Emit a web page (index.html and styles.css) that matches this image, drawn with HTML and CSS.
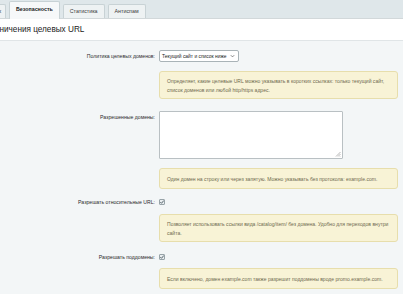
FILE: index.html
```html
<!DOCTYPE html>
<html lang="ru">
<head>
<meta charset="utf-8">
<link rel="stylesheet" href="styles.css">
</head>
<body>
<div class="tabs">
  <div class="tab tab-first">Сокращение ссылок</div>
  <div class="tab tab-active">Безопасность</div>
  <div class="tab">Статистика</div>
  <div class="tab">Антиспам</div>
</div>
<div class="title"><span class="title-text">Ограничения целевых URL</span></div>
<div class="content">
  <div class="row row-select">
    <div class="label">Политика целевых доменов:</div>
    <div class="field">
      <div class="select"><span>Текущий сайт и список ниже</span><svg class="arrow" width="5" height="4" viewBox="0 0 5 4"><path d="M0.8 1.2 L2.5 2.9 L4.2 1.2" fill="none" stroke="#555" stroke-width="0.7"/></svg></div>
    </div>
  </div>
  <div class="row row-note1">
    <div class="label"></div>
    <div class="note">Определяет, какие целевые URL можно указывать в коротких ссылках: только текущий сайт, список доменов или любой http/https адрес.</div>
  </div>
  <div class="row row-area">
    <div class="label label-top">Разрешенные домены:</div>
    <div class="field">
      <div class="textarea"><svg class="grip" width="6" height="6" viewBox="0 0 6 6"><path d="M5.5 1 L1 5.5 M5.5 3 L3 5.5 M5.5 5 L5 5.5" stroke="#999" stroke-width="0.7"/></svg></div>
    </div>
  </div>
  <div class="row row-note2">
    <div class="label"></div>
    <div class="note">Один домен на строку или через запятую. Можно указывать без протокола: example.com.</div>
  </div>
  <div class="row row-cb1">
    <div class="label">Разрешать относительные URL:</div>
    <div class="field"><span class="cb"><svg width="6" height="6" viewBox="0 0 6 6"><path d="M1.3 3.1 L2.5 4.3 L4.8 1.5" fill="none" stroke="#4a5860" stroke-width="0.9"/></svg></span></div>
  </div>
  <div class="row row-note3">
    <div class="label"></div>
    <div class="note">Позволяет использовать ссылки вида /catalog/item/ без домена. Удобно для переходов внутри сайта.</div>
  </div>
  <div class="row row-cb2">
    <div class="label">Разрешать поддомены:</div>
    <div class="field"><span class="cb"><svg width="6" height="6" viewBox="0 0 6 6"><path d="M1.3 3.1 L2.5 4.3 L4.8 1.5" fill="none" stroke="#4a5860" stroke-width="0.9"/></svg></span></div>
  </div>
  <div class="row row-note4">
    <div class="label"></div>
    <div class="note">Если включено, домен example.com также разрешит поддомены вроде promo.example.com.</div>
  </div>
</div>
</body>
</html>
```
FILE: styles.css
```css
html, body {
  margin: 0;
  padding: 0;
  width: 403px;
  height: 294px;
  overflow: hidden;
  background: #f3f6f7;
  font-family: "Liberation Sans", Arial, sans-serif;
  color: #2b2b2b;
}

.tabs {
  height: 18px;
  background: #dfe7ea;
  border-bottom: 1px solid #d2d8da;
  display: flex;
  align-items: flex-end;
  gap: 3px;
  margin-left: -56px;
}

.tab {
  height: 14px;
  box-sizing: border-box;
  padding: 0 6px;
  background: #eef2f3;
  border: 1px solid #c8d2d5;
  border-bottom: none;
  border-radius: 2px 2px 0 0;
  font-size: 5.3px;
  line-height: 13px;
  color: #3a3a3a;
  white-space: nowrap;
}

.tab-first {
  width: 62px;
  text-align: right;
}

.tab-active {
  height: 18px;
  margin-bottom: -1px;
  background: #f6f8f9;
  font-weight: bold;
  padding: 0 6px;
  line-height: 15px;
  color: #222;
}

.title {
  height: 21px;
  background: #ffffff;
  border-bottom: 1px solid #e0e5e7;
  display: flex;
  align-items: center;
  overflow: hidden;
}

.title-text {
  margin-left: -19px;
  font-size: 8.2px;
  color: #222;
  white-space: nowrap;
}

.content {
  padding: 9px 5px 0 0;
  display: flex;
  flex-direction: column;
}

.row {
  display: grid;
  grid-template-columns: 155px 1fr;
  column-gap: 4px;
}

.label {
  text-align: right;
  font-size: 5.15px;
  color: #2b2b2b;
  align-self: center;
  white-space: nowrap;
}

.label-top {
  align-self: start;
  padding-top: 3px;
}

.row-select { height: 12px; }
.row-note1 { margin-top: 9px; }
.row-area { margin-top: 12px; }
.row-note2 { margin-top: 9px; }
.row-cb1 { margin-top: 7px; height: 12px; }
.row-note3 { margin-top: 6px; }
.row-cb2 { margin-top: 9px; height: 12px; }
.row-note4 { margin-top: 5px; }

.field {
  display: flex;
  align-items: center;
}

.select {
  width: 80px;
  height: 12px;
  box-sizing: border-box;
  border: 1px solid #a9b3b7;
  border-radius: 2px;
  background: #fff;
  display: flex;
  align-items: center;
  justify-content: space-between;
  padding: 0 3px 0 2px;
  font-size: 4.9px;
  color: #222;
  white-space: nowrap;
}

.arrow { display: block; }

.textarea {
  width: 184px;
  height: 48px;
  box-sizing: border-box;
  border: 1px solid #b9c0c3;
  border-radius: 1px;
  background: #fff;
  display: flex;
  align-items: flex-end;
  justify-content: flex-end;
  padding: 0 1px 1px 0;
}

.grip { display: block; }

.note {
  box-sizing: border-box;
  background: #f8f3d6;
  border: 1px solid #e7deac;
  border-radius: 3px;
  padding: 5px 6px 4px 7px;
  font-size: 5.05px;
  line-height: 8.5px;
  color: #6f6a4f;
}

.row-note2 .note,
.row-note4 .note {
  padding: 5.5px 6px 5px 7px;
}

.cb {
  width: 6px;
  height: 6px;
  box-sizing: border-box;
  border: 1px solid #97a3a8;
  border-radius: 1px;
  background: #e9eef0;
  display: flex;
  align-items: center;
  justify-content: center;
  overflow: hidden;
}

.cb svg { display: block; flex: none; }
```
